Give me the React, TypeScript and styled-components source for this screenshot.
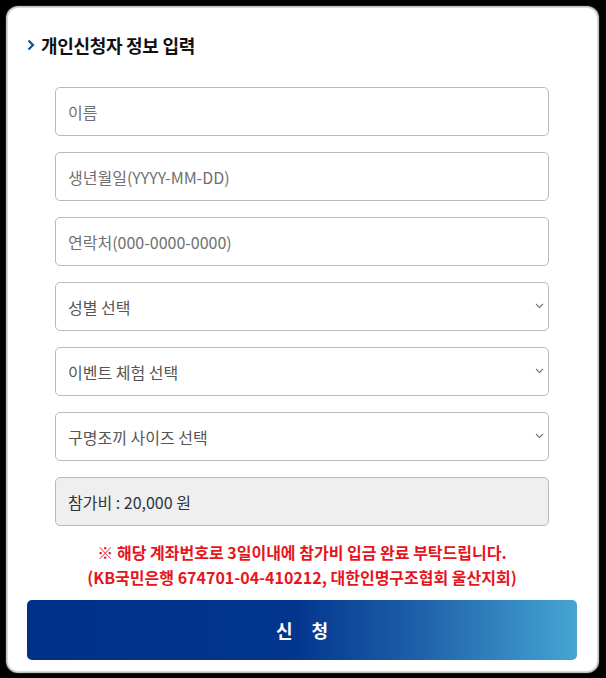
import styled, { createGlobalStyle } from "styled-components";

const GlobalStyle = createGlobalStyle`
  html, body {
    margin: 0;
    padding: 0;
    background: #000;
  }
  body {
    font-family: "Noto Sans CJK KR", "Noto Sans", sans-serif;
  }
  * {
    box-sizing: border-box;
  }
`;

const Card = styled.div`
  margin: 8px;
  width: 589px;
  height: 663px;
  background: #fff;
  border-radius: 10px;
  box-shadow: 0 0 1px 2px #d8d8d8;
  padding: 25px 20px 0 19px;
`;

const Heading = styled.h2`
  display: flex;
  align-items: center;
  gap: 6px;
  margin: 0 0 30px 0;
  font-size: 18px;
  line-height: 24px;
  font-weight: 700;
  color: #111;
  letter-spacing: -0.3px;
`;

const Fields = styled.div`
  display: flex;
  flex-direction: column;
  gap: 16px;
  padding: 0 28px 0 28px;
`;

const TextField = styled.input`
  width: 494px;
  height: 49px;
  border: 1px solid #b9b9b9;
  border-radius: 5px;
  padding: 0 12px;
  font-family: inherit;
  font-size: 16px;
  color: #333;
  background: #fff;
  outline: none;

  &::placeholder {
    color: #707070;
  }
`;

const SelectWrap = styled.div`
  position: relative;
  width: 494px;
  height: 49px;

  svg {
    position: absolute;
    right: 5px;
    top: 21px;
    pointer-events: none;
  }
`;

const Select = styled.select`
  width: 100%;
  height: 100%;
  appearance: none;
  border: 1px solid #b9b9b9;
  border-radius: 5px;
  padding: 0 12px;
  font-family: inherit;
  font-size: 16px;
  color: #555;
  background: #fff;
  outline: none;
`;

const FeeBox = styled.div`
  width: 494px;
  height: 49px;
  display: flex;
  align-items: center;
  border: 1px solid #b9b9b9;
  border-radius: 5px;
  padding: 0 12px;
  background: #efefef;
  font-size: 16px;
  color: #2f3440;
`;

const Notice = styled.p`
  margin: 14px 0 0;
  text-align: center;
  color: #e8141c;
  font-weight: 700;
  font-size: 16px;
  line-height: 25px;
  letter-spacing: 0;
`;

const SubmitButton = styled.button`
  display: block;
  margin-top: 10px;
  width: 550px;
  height: 60px;
  border: none;
  border-radius: 5px;
  background: linear-gradient(
    to right,
    #00318a 0%,
    #02358d 48%,
    #1f62aa 72%,
    #46a5d4 100%
  );
  color: #fff;
  font-family: inherit;
  font-size: 18px;
  font-weight: 700;
  letter-spacing: 19px;
  text-indent: 19px;
  cursor: pointer;
`;

function Chevron() {
  return (
    <svg width="9" height="6" viewBox="0 0 9 6">
      <path d="M1 1 L4.5 4.5 L8 1" fill="none" stroke="#777" strokeWidth="1.1" />
    </svg>
  );
}

function HeadArrow() {
  return (
    <svg width="8" height="12" viewBox="0 0 8 12">
      <path d="M1.5 1.5 L6 6 L1.5 10.5" fill="none" stroke="#144f8f" strokeWidth="2.2" />
    </svg>
  );
}

const selects = ["성별 선택", "이벤트 체험 선택", "구명조끼 사이즈 선택"];

export default function App() {
  return (
    <>
      <GlobalStyle />
      <Card>
        <Heading>
          <HeadArrow />
          개인신청자 정보 입력
        </Heading>
        <Fields>
          <TextField placeholder="이름" />
          <TextField placeholder="생년월일(YYYY-MM-DD)" />
          <TextField placeholder="연락처(000-0000-0000)" />
          {selects.map((s) => (
            <SelectWrap key={s}>
              <Select defaultValue="">
                <option value="">{s}</option>
              </Select>
              <Chevron />
            </SelectWrap>
          ))}
          <FeeBox>참가비 : 20,000 원</FeeBox>
        </Fields>
        <Notice>
          ※ 해당 계좌번호로 3일이내에 참가비 입금 완료 부탁드립니다.
          <br />
          (KB국민은행 674701-04-410212, 대한인명구조협회 울산지회)
        </Notice>
        <SubmitButton>신청</SubmitButton>
      </Card>
    </>
  );
}
